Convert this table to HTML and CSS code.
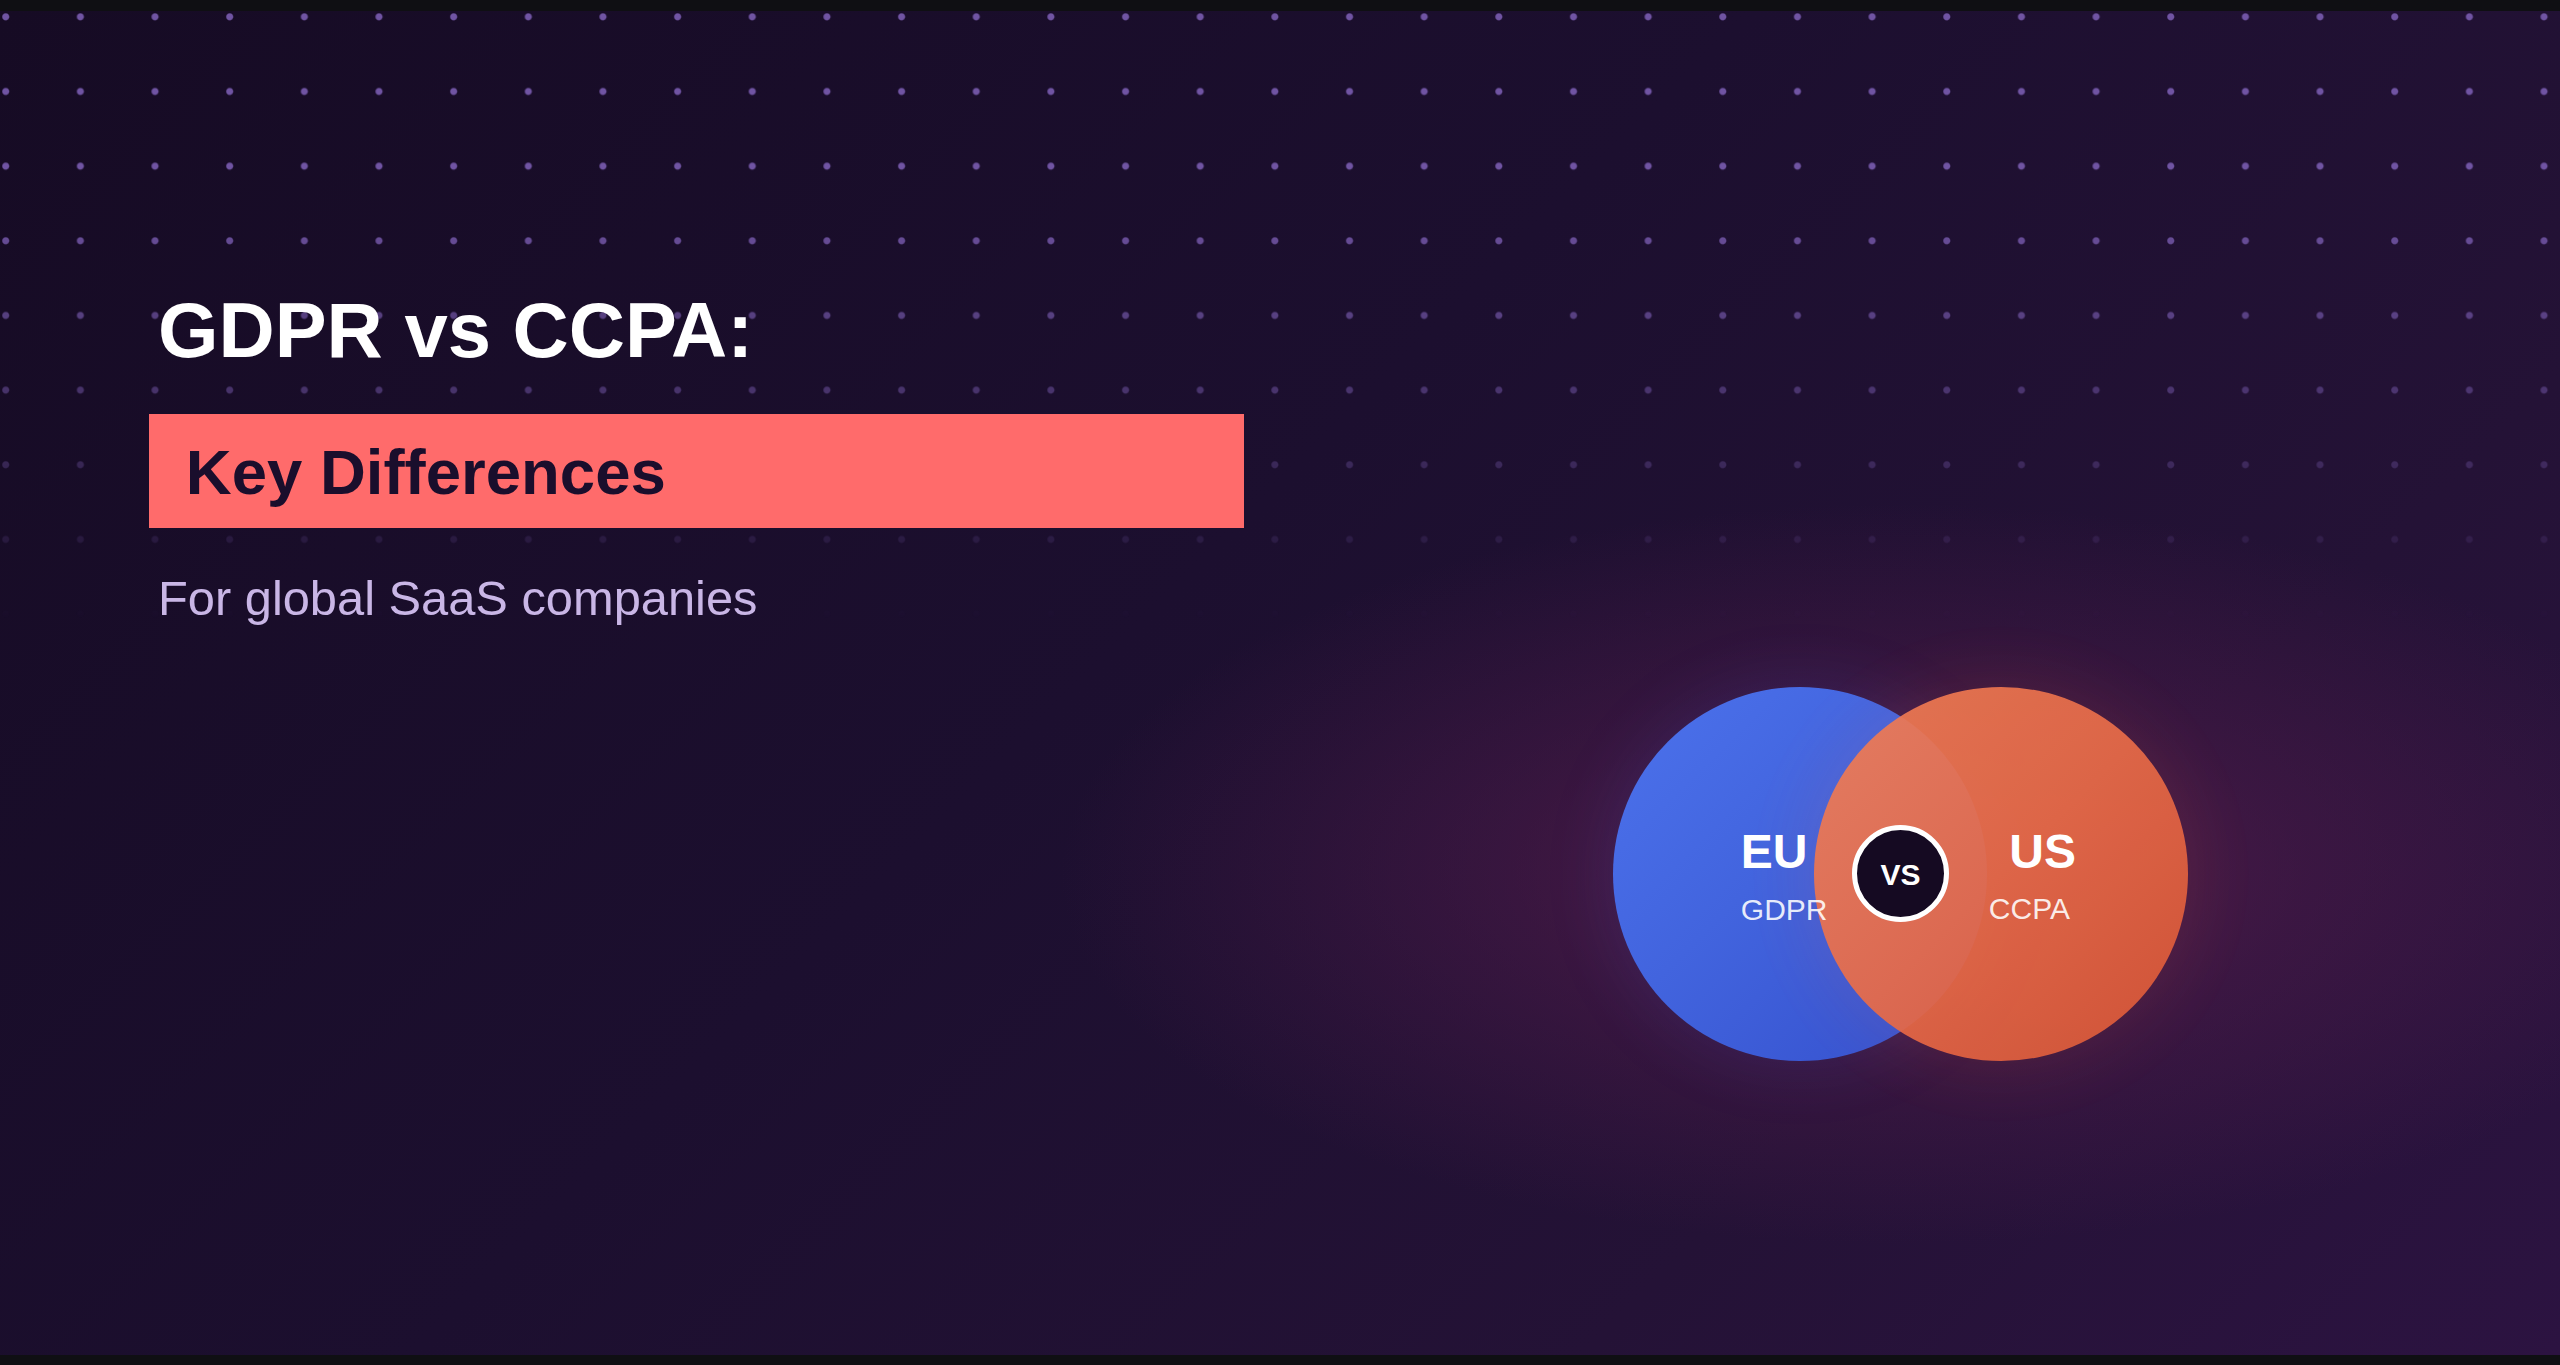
FILE: index.html
```html
<!DOCTYPE html>
<html lang="en">
<head>
<meta charset="utf-8">
<title>GDPR vs CCPA: Key Differences</title>
<link rel="stylesheet" href="styles.css">
</head>
<body>
  <main class="banner">
    <div class="dots" aria-hidden="true"></div>
    <section class="intro">
      <h1 class="title">GDPR vs CCPA:</h1>
      <div class="highlight">Key Differences</div>
      <p class="subtitle">For global SaaS companies</p>
    </section>
    <section class="visual">
      <div class="venn">
        <div class="circle circle-eu"></div>
        <div class="circle circle-us"></div>
        <div class="label label-eu">
          <span class="region">EU</span>
          <span class="law">GDPR</span>
        </div>
        <div class="label label-us">
          <span class="region">US</span>
          <span class="law law-us">CCPA</span>
        </div>
        <div class="vs">VS</div>
      </div>
    </section>
  </main>
</body>
</html>
```

FILE: styles.css
```css
html, body {
  margin: 0;
  padding: 0;
}

body {
  height: 100vh;
  background: #0f0f13;
  display: flex;
  align-items: center;
  font-family: "Liberation Sans", Arial, sans-serif;
}

.banner {
  position: relative;
  width: 2560px;
  height: 1344px;
  overflow: hidden;
  display: flex;
  background:
    radial-gradient(ellipse 840px 370px at 1900px 863px, rgba(108, 34, 86, 0.66) 0%, rgba(90, 29, 80, 0.40) 48%, rgba(70, 22, 66, 0) 100%),
    linear-gradient(135deg, #160b24 0%, #1c0f2f 45%, #241236 75%, #2c1341 100%);
}

.dots {
  position: absolute;
  inset: 0;
  background-image: radial-gradient(circle at 5.7px 5.8px, #7054a3 0, #7054a3 2.9px, rgba(112, 84, 163, 0) 4.1px);
  background-size: 74.667px 74.667px;
  -webkit-mask-image: linear-gradient(to bottom, #000 0px, #000 180px, rgba(0, 0, 0, 0) 610px);
  mask-image: linear-gradient(to bottom, #000 0px, #000 180px, rgba(0, 0, 0, 0) 610px);
  z-index: 0;
}

.intro {
  position: relative;
  z-index: 1;
  box-sizing: border-box;
  width: 1244px;
  flex: none;
  padding: 273px 0 0 158px;
  display: flex;
  flex-direction: column;
  align-items: flex-start;
}

.title {
  margin: 0;
  font-size: 77.8px;
  line-height: 92px;
  font-weight: 700;
  color: #ffffff;
  white-space: nowrap;
}

.highlight {
  box-sizing: border-box;
  margin: 38px 0 0 -8.7px;
  width: 1094.7px;
  height: 114.3px;
  padding: 20px 35px 0 36.5px;
  background: #ff6b6b;
  color: #1a0e2c;
  font-size: 63.5px;
  line-height: 76px;
  font-weight: 700;
  white-space: nowrap;
}

.subtitle {
  margin: 41px 0 0;
  font-size: 48.8px;
  line-height: 58px;
  font-weight: 400;
  color: #c9b6e6;
  white-space: nowrap;
}

.visual {
  position: relative;
  z-index: 1;
  flex: 1;
  display: flex;
  justify-content: center;
  align-items: flex-start;
  padding: 676px 3px 0 0;
}

.venn {
  position: relative;
  width: 575.3px;
  height: 374px;
}

.circle {
  position: absolute;
  top: 0;
  width: 374px;
  height: 374px;
  border-radius: 50%;
}

.circle-eu {
  left: 0;
  background: linear-gradient(135deg, #4c72ec 0%, #4264de 45%, #344fcc 100%);
  box-shadow: 0 0 70px rgba(70, 100, 230, 0.16);
}

.circle-us {
  left: 201.3px;
  background: linear-gradient(135deg, #f27f56 0%, #ea6c48 50%, #dc5736 100%);
  opacity: 0.92;
  box-shadow: 0 0 80px rgba(240, 100, 70, 0.16);
}

.label {
  position: absolute;
  top: 141px;
  display: flex;
  flex-direction: column;
  color: #ffffff;
}

.label-eu {
  left: 128px;
  align-items: flex-start;
}

.label-us {
  left: 376px;
  align-items: flex-end;
}

.region {
  font-size: 48px;
  line-height: 48px;
  font-weight: 700;
}

.law {
  margin-top: 19px;
  font-size: 30px;
  line-height: 30px;
  font-weight: 400;
  color: rgba(255, 255, 255, 0.88);
}

.law-us {
  margin-right: 6px;
  margin-top: 18px;
}

.vs {
  position: absolute;
  left: 238.9px;
  top: 138.3px;
  box-sizing: border-box;
  width: 97.4px;
  height: 97.4px;
  border: 5px solid #ffffff;
  border-radius: 50%;
  background: #150a22;
  color: #ffffff;
  font-size: 30px;
  font-weight: 700;
  display: flex;
  align-items: center;
  justify-content: center;
  padding-top: 3px;
}
```
